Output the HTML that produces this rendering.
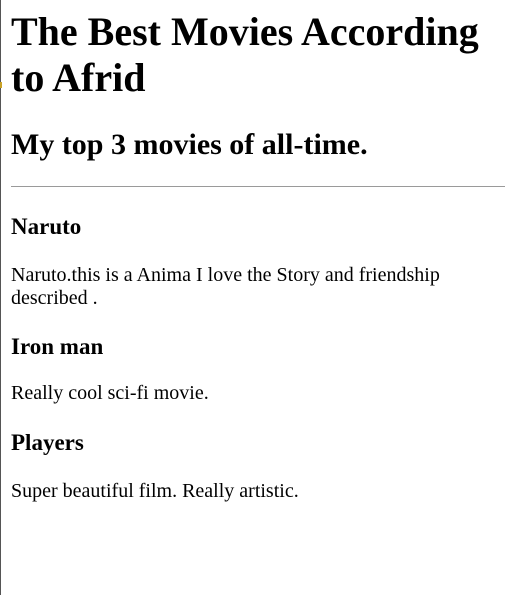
<!DOCTYPE html>
<html><head><meta charset="utf-8"><style>
html,body{margin:0;padding:0;width:515px;height:595px;overflow:hidden;background:#fff;}
body{font-family:"Liberation Serif",serif;color:#000;position:relative;border-left:1px solid #555;box-sizing:border-box;}
.a{position:absolute;left:10px;margin:0;white-space:nowrap;}
h1.a{font-size:40px;line-height:46px;font-weight:bold;}
h2.a{font-size:30px;line-height:34.5px;font-weight:bold;}
h3.a{font-size:23px;line-height:26.5px;font-weight:bold;}
p.a{font-size:20px;line-height:23px;}
hr{position:absolute;left:10px;top:186px;width:494px;margin:0;border:0;border-top:1px solid #9a9a9a;height:0;}
</style></head><body>
<h1 class="a" style="top:9px">The Best Movies According<br>to Afrid</h1>
<h2 class="a" style="top:128px">My top 3 movies of all-time.</h2>
<hr>
<h3 class="a" style="top:214px">Naruto</h3>
<p class="a" style="top:264px">Naruto.this is a Anima I love the Story and friendship<br>described .</p>
<h3 class="a" style="top:334px">Iron man</h3>
<p class="a" style="top:382px">Really cool sci-fi movie.</p>
<h3 class="a" style="top:430px">Players</h3>
<p class="a" style="top:480px">Super beautiful film. Really artistic.</p>
<div style="position:absolute;left:-1px;top:82px;width:2px;height:6px;background:#c9a227"></div>
</body></html>
